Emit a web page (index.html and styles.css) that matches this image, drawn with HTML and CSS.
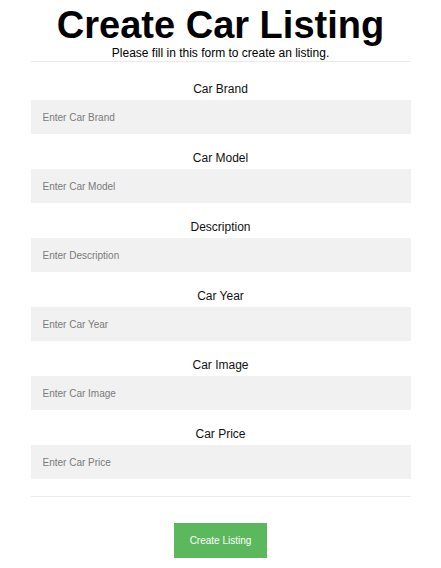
FILE: index.html
```html
<!DOCTYPE html>
<html lang="en">
<head>
<meta charset="utf-8">
<title>Create Car Listing</title>
<link rel="stylesheet" href="styles.css">
</head>
<body>
<form class="container">
  <h1 class="title">Create Car Listing</h1>
  <p class="subtitle">Please fill in this form to create an listing.</p>
  <hr class="rule">
  <div class="field">
    <label class="label" for="brand">Car Brand</label>
    <input class="input" id="brand" type="text" placeholder="Enter Car Brand">
  </div>
  <div class="field">
    <label class="label" for="model">Car Model</label>
    <input class="input" id="model" type="text" placeholder="Enter Car Model">
  </div>
  <div class="field">
    <label class="label" for="desc">Description</label>
    <input class="input" id="desc" type="text" placeholder="Enter Description">
  </div>
  <div class="field">
    <label class="label" for="year">Car Year</label>
    <input class="input" id="year" type="text" placeholder="Enter Car Year">
  </div>
  <div class="field">
    <label class="label" for="image">Car Image</label>
    <input class="input" id="image" type="text" placeholder="Enter Car Image">
  </div>
  <div class="field">
    <label class="label" for="price">Car Price</label>
    <input class="input" id="price" type="text" placeholder="Enter Car Price">
  </div>
  <hr class="rule rule-bottom">
  <div class="actions">
    <button class="btn" type="button">Create Listing</button>
  </div>
</form>
</body>
</html>
```
FILE: styles.css
```css
html, body {
  margin: 0;
  padding: 0;
  background: #ffffff;
}

body {
  font-family: "Liberation Sans", Arial, sans-serif;
  color: #000;
}

.container {
  width: 380px;
  margin: 0 auto;
  padding-top: 4px;
  display: flex;
  flex-direction: column;
}

.title {
  margin: 0;
  font-size: 38px;
  line-height: 42px;
  font-weight: bold;
  text-align: center;
}

.subtitle {
  margin: 0;
  font-size: 12px;
  line-height: 14px;
  text-align: center;
}

.rule {
  margin: 1px 0 20px;
  border: 0;
  border-top: 1px solid #ebebeb;
  height: 0;
}

.rule-bottom {
  margin: 0 0 26px;
}

.field {
  display: flex;
  flex-direction: column;
  margin-bottom: 17px;
}

.label {
  font-size: 12px;
  line-height: 14px;
  text-align: center;
  margin-bottom: 4px;
  color: #111;
}

.input {
  box-sizing: border-box;
  width: 100%;
  height: 34px;
  border: 0;
  margin: 0;
  padding: 0 12px;
  background: #f1f1f1;
  font-family: "Liberation Sans", Arial, sans-serif;
  font-size: 10px;
  color: #333;
  outline: none;
}

.input::placeholder {
  color: #7a7a7a;
}

.actions {
  display: flex;
  justify-content: center;
}

.btn {
  width: 93px;
  height: 35px;
  border: 0;
  padding: 0;
  background: #5cb85c;
  color: #fff;
  font-family: "Liberation Sans", Arial, sans-serif;
  font-size: 10px;
  cursor: pointer;
}
```
